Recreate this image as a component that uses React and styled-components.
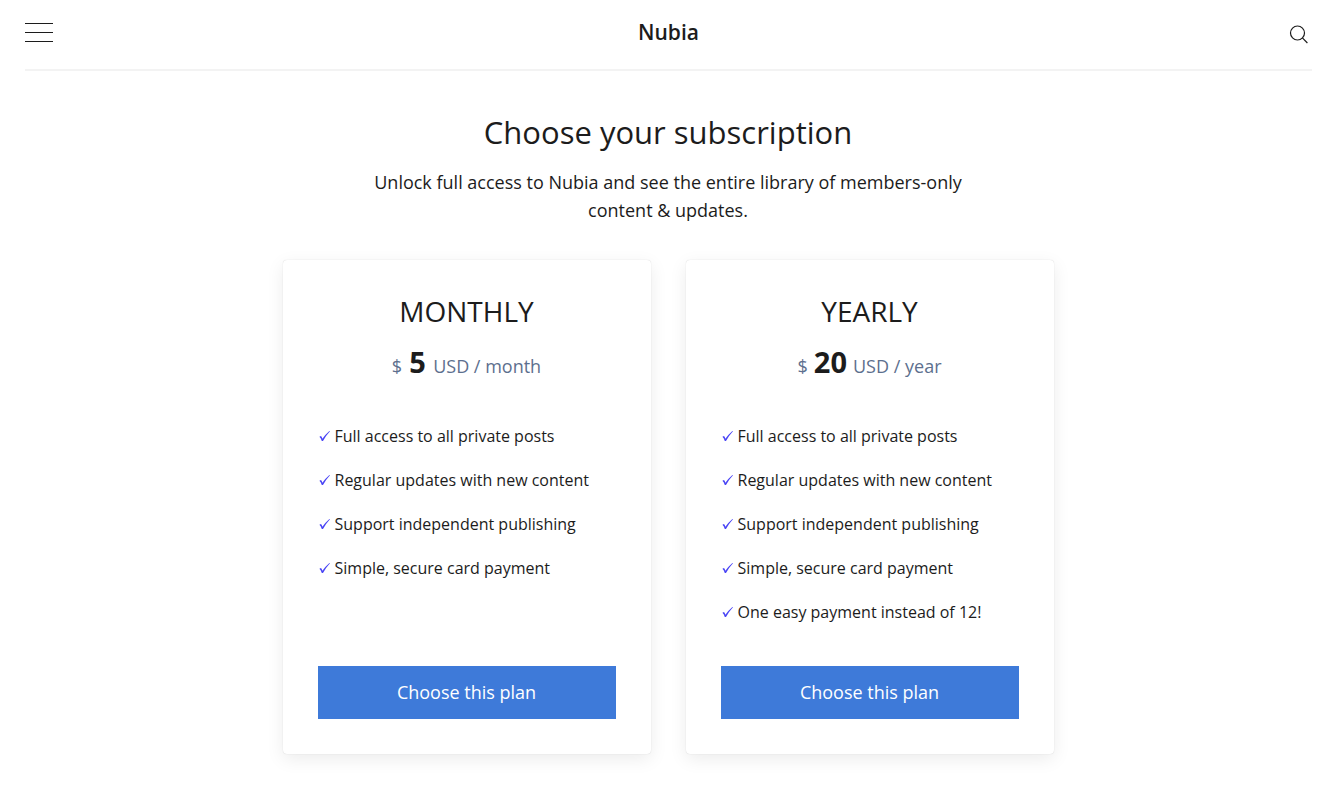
import styled, { createGlobalStyle } from 'styled-components';

const GlobalStyle = createGlobalStyle`
    *, *::before, *::after {
        box-sizing: border-box;
    }

    body {
        margin: 0;
        background-color: #fff;
        color: #1c1c1c;
        font-family: "Open Sans", "Noto Sans", sans-serif;
        font-size: 18px;
        line-height: 28px;
    }

    button {
        padding: 0;
        border: 0;
        background: none;
        color: inherit;
        font: inherit;
        cursor: pointer;
    }
`

const Header = styled.header`
    display: grid;
    grid-template-columns: 1fr auto 1fr;
    align-items: center;
    height: 71px;
    margin: 0 24px 0 25px;
    padding-bottom: 4px;
    border-bottom: 2px solid #f3f3f3;
`

const MenuButton = styled.button`
    display: flex;
    flex-direction: column;
    justify-self: start;
    gap: 8px;
    width: 28px;
`

const MenuLine = styled.span`
    height: 1px;
    background-color: #1c1c1c;
`

const Logo = styled.a`
    padding-bottom: 2px;
    color: #1c1c1c;
    font-size: 21px;
    font-weight: 600;
    text-decoration: none;
`

const SearchButton = styled.button`
    display: flex;
    justify-self: end;
    padding: 3px 4px 0 0;
`

const Main = styled.main`
    max-width: 771px;
    margin: 0 auto;
    padding: 40px 0;
    text-align: center;
`

const Title = styled.h1`
    margin: 0 0 15px;
    font-size: 31px;
    font-weight: 400;
    line-height: 42px;
`

const Intro = styled.p`
    max-width: 620px;
    margin: 0 auto 36px;
`

const Plans = styled.div`
    display: grid;
    grid-template-columns: repeat(auto-fit, minmax(300px, 1fr));
    gap: 35px;
`

const Card = styled.section`
    display: flex;
    flex-direction: column;
    padding: 35px;
    border-radius: 4px;
    background-color: #fff;
    box-shadow: 0 0 1px rgba(0, 0, 0, 0.2), 0 5px 18px rgba(0, 0, 0, 0.08);
`

const PlanName = styled.h2`
    margin: 0 0 15px;
    font-size: 28px;
    font-weight: 400;
    line-height: 32px;
    text-transform: uppercase;
`

const Price = styled.p`
    display: flex;
    justify-content: center;
    align-items: baseline;
    gap: 6px;
    margin: 0 0 38px;
    color: #5d6f8e;
    line-height: 40px;
`

const Amount = styled.strong`
    min-width: 19px;
    color: #1c1c1c;
    font-size: 29px;
    font-weight: 700;
`

const Features = styled.ul`
    display: flex;
    flex: 1;
    flex-direction: column;
    gap: 20px;
    margin: 0 0 42px;
    padding: 0;
    font-size: 16px;
    line-height: 24px;
    list-style: none;
    text-align: left;
`

const Feature = styled.li`
    display: flex;
    align-items: center;
    gap: 4px;
`

const PlanButton = styled.button`
    height: 53px;
    padding-bottom: 2px;
    background-color: #3e7ad9;
    color: #fff;
`

const plans = [
    {
        name: 'Monthly',
        amount: 5,
        period: 'month',
        features: [
            'Full access to all private posts',
            'Regular updates with new content',
            'Support independent publishing',
            'Simple, secure card payment',
        ],
    },
    {
        name: 'Yearly',
        amount: 20,
        period: 'year',
        features: [
            'Full access to all private posts',
            'Regular updates with new content',
            'Support independent publishing',
            'Simple, secure card payment',
            'One easy payment instead of 12!',
        ],
    },
];

const SearchIcon = () => (
    <svg width="19" height="19" viewBox="0 0 19 19" fill="none" stroke="#1c1c1c" strokeWidth="1.2" aria-hidden="true">
        <circle cx="8.5" cy="8" r="7"/>
        <path d="M13.4 12.9 L18.4 18"/>
    </svg>
);

const CheckIcon = () => (
    <svg width="13" height="12" viewBox="0 0 13 12" fill="#4a45f5" aria-hidden="true">
        <path d="M1.4 6.8 L3 6 Q4 7.2 4.4 8.8 Q7.4 4.2 11.4 0.9 L12 1.2 Q8.2 5.2 5 11 L3.8 11 Q3 8.4 1.4 6.8 Z"/>
    </svg>
);

const Plan = ({ name, amount, period, features }) => (
    <Card>
        <PlanName>{name}</PlanName>
        <Price>
            <span>$</span>
            <Amount>{amount}</Amount>
            <span>USD / {period}</span>
        </Price>
        <Features>
            {features.map(feature => (
                <Feature key={feature}>
                    <CheckIcon/>
                    <span>{feature}</span>
                </Feature>
            ))}
        </Features>
        <PlanButton type="button">Choose this plan</PlanButton>
    </Card>
);

const App = () => {
    return (
        <>
            <GlobalStyle/>
            <Header>
                <MenuButton type="button" aria-label="Menu">
                    <MenuLine/>
                    <MenuLine/>
                    <MenuLine/>
                </MenuButton>
                <Logo href="#">Nubia</Logo>
                <SearchButton type="button" aria-label="Search">
                    <SearchIcon/>
                </SearchButton>
            </Header>
            <Main>
                <Title>Choose your subscription</Title>
                <Intro>Unlock full access to Nubia and see the entire library of members-only content &amp; updates.</Intro>
                <Plans>
                    {plans.map(plan => <Plan key={plan.name} {...plan}/>)}
                </Plans>
            </Main>
        </>
    );
}

export default App;
